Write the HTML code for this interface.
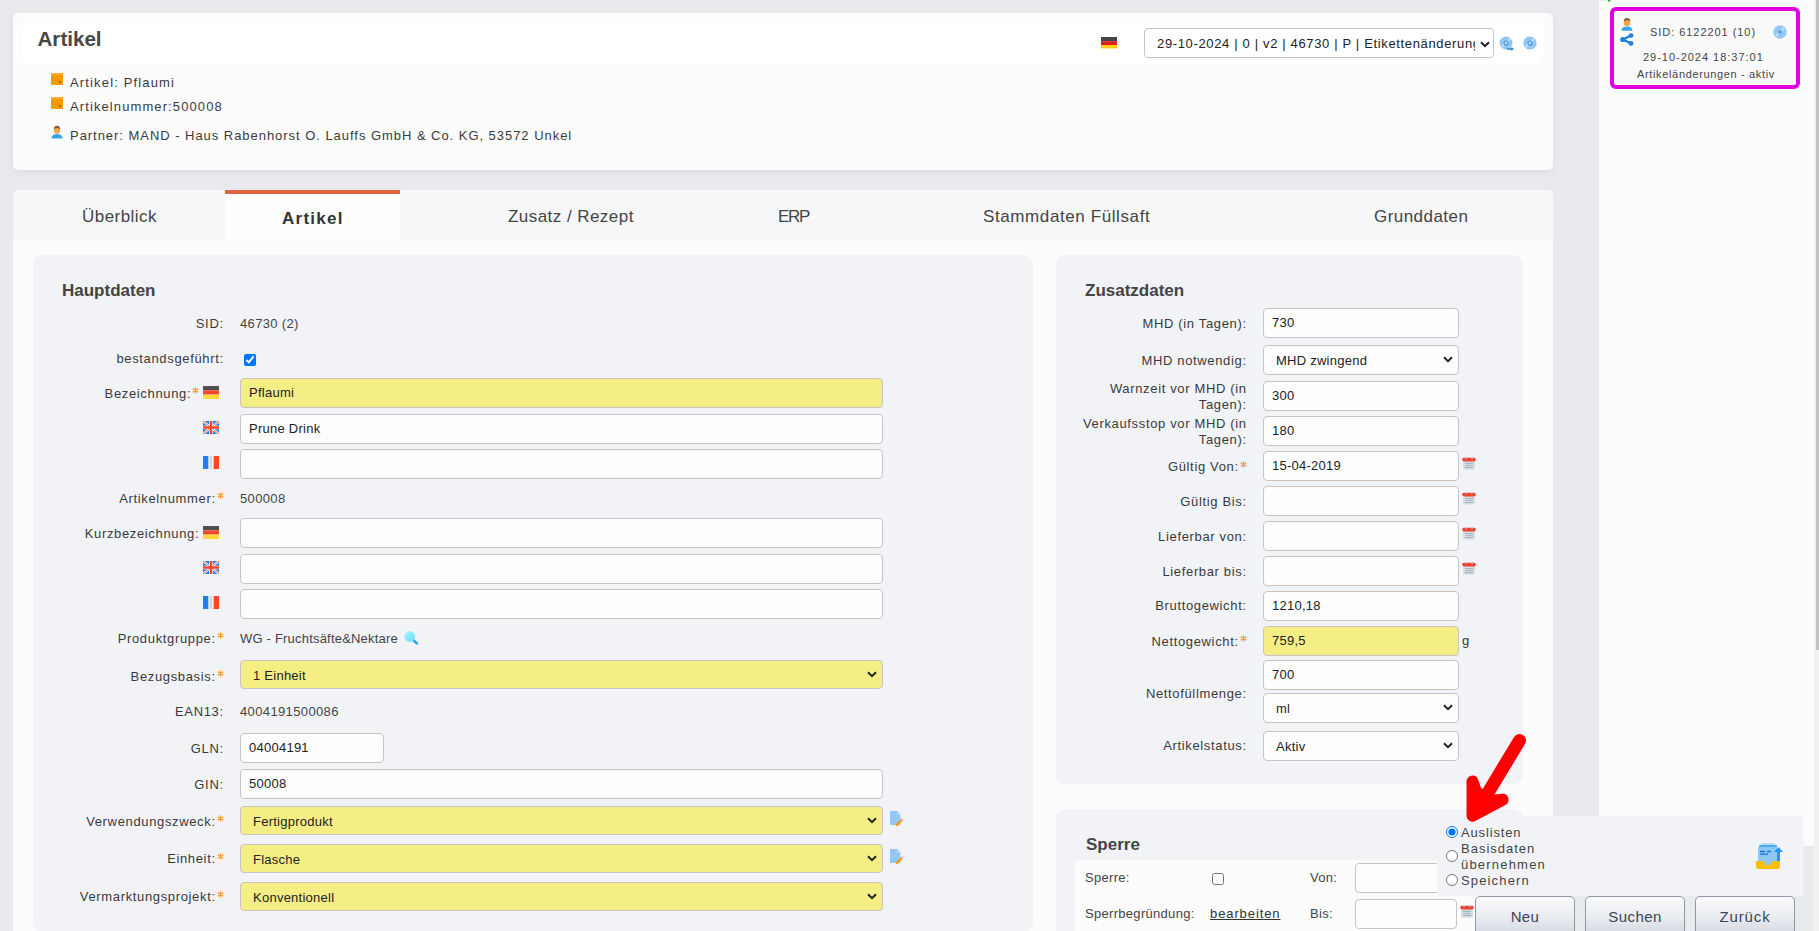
<!DOCTYPE html>
<html><head><meta charset="utf-8">
<style>
*{box-sizing:border-box;margin:0;padding:0}
html,body{width:1819px;height:931px;overflow:hidden;background:#e9eaee;font-family:"Liberation Sans",sans-serif;color:#444}
.a{position:absolute}
.t{position:absolute;font-size:13px;line-height:16px;letter-spacing:0.65px;white-space:nowrap;color:#3a3a3a}
.r{text-align:right}
.inp{position:absolute;height:29px;border:1px solid #c8c4c4;border-radius:4px;background:#fdfdfd;font-size:13px;line-height:27px;letter-spacing:0.25px;color:#222;padding-left:8px;white-space:nowrap;overflow:hidden}
.y{background:#f5ee85}
.sel{padding-left:12px}
.chev{position:absolute;right:5px;top:10px;width:10px;height:7px}
.star{color:#f39200}
.flag{position:absolute;width:16px;height:13px}
.h2{position:absolute;font-size:17px;font-weight:bold;line-height:20px;color:#444;white-space:nowrap}
.tab{position:absolute;top:207px;font-size:17px;line-height:20px;letter-spacing:0.45px;color:#444;white-space:nowrap}
.cal{position:absolute;width:13px;height:12px}
.btn{position:absolute;top:896px;width:100px;height:40px;border:1px solid #8d97a8;border-radius:5px;background:linear-gradient(#fbfbfc,#e6e9ee 60%,#d3d8e0);font-size:15px;color:#3b4556;text-align:center;line-height:40px;letter-spacing:0.4px}
</style></head><body>

<!-- header card -->
<div class="a" style="left:13px;top:13px;width:1540px;height:157px;background:#fcfcfd;border-radius:5px;box-shadow:0 2px 8px rgba(0,0,0,0.055)"></div>
<div class="a" style="left:23px;top:23px;width:1520px;height:40px;background:#fff;border-radius:6px"></div>
<div class="a" style="left:37.5px;top:27px;font-size:20.6px;font-weight:bold;line-height:24px;color:#474747">Artikel</div>
<!-- tab bar -->
<div class="a" style="left:13px;top:190px;width:1540px;height:50px;background:#f6f7f9;border-radius:5px 5px 0 0"></div>
<div class="a" style="left:225px;top:190px;width:175px;height:50px;background:#fdfdfd;border-top:4px solid #dd6640"></div>
<!-- content white -->
<div class="a" style="left:13px;top:240px;width:1540px;height:700px;background:#fcfcfc"></div>

<!-- panels -->
<div class="a" style="left:33px;top:255px;width:1000px;height:677px;background:#f2f3f7;border-radius:9px"></div>
<div class="a" style="left:1056px;top:255px;width:467px;height:529px;background:#f2f3f7;border-radius:9px"></div>
<div class="a" style="left:1056px;top:809px;width:467px;height:200px;background:#f2f3f7;border-radius:9px"></div>

<!-- sidebar -->
<div class="a" style="left:1599px;top:0;width:215px;height:846px;background:#fcfcfc"></div>
<div class="a" style="left:1814px;top:0;width:5px;height:931px;background:#f1f1f1"></div>


<!-- header flag + select + icons -->
<svg class="a" style="left:1101px;top:36px" width="16" height="13" viewBox="0 0 16 13"><rect y="1" width="16" height="4" fill="#2b2b2b"/><rect y="5" width="16" height="4" fill="#dd1f1f"/><rect y="9" width="16" height="3.5" fill="#ffcc1a"/><rect y="1" width="16" height="5" fill="#fff" opacity="0.12"/></svg>
<div class="inp sel" style="left:1144px;top:28px;width:350px;height:30px;background:#fff;line-height:30px;padding-left:12px;color:#222"><span style="display:inline-block;width:318px;overflow:hidden;vertical-align:top;letter-spacing:0.65px">29-10-2024 | 0 | v2 | 46730 | P | Etikettenänderung</span><svg class="chev" style="top:12px;right:3px" viewBox="0 0 10 7"><path d="M1 1.2 L5 5.2 L9 1.2" fill="none" stroke="#222" stroke-width="2"/></svg></div>
<svg class="a" style="left:1499px;top:36px" width="16" height="16" viewBox="0 0 16 16"><circle cx="7" cy="7" r="6.5" fill="#92c6f3"/><path d="M2.5 11.5 L11.5 2.5" stroke="#cfe6fb" stroke-width="1.2"/><circle cx="7" cy="7" r="2" fill="none" stroke="#4a97e0" stroke-width="1.1"/><path d="M8 13 H14" stroke="#2f86d8" stroke-width="1.6"/><path d="M12.3 11 L15 13 L12.3 15 Z" fill="#2f86d8"/></svg>
<svg class="a" style="left:1523px;top:36px" width="14" height="14" viewBox="0 0 14 14"><circle cx="7" cy="7" r="6.6" fill="#92c6f3"/><path d="M2.5 11.5 L11.5 2.5" stroke="#cfe6fb" stroke-width="1.2"/><circle cx="7" cy="7" r="2" fill="none" stroke="#4a97e0" stroke-width="1.1"/></svg>

<!-- header items -->
<svg class="a" style="left:51px;top:73px" width="12" height="12" viewBox="0 0 12 12"><rect x="0" y="0" width="12" height="12" rx="1" fill="#fb9700"/><rect x="0" y="0" width="12" height="2" fill="#ffad33"/><rect x="8" y="8" width="2" height="2" fill="#b36a00"/></svg>
<div class="t" style="left:70px;top:75px;letter-spacing:1.15px">Artikel: Pflaumi</div>
<svg class="a" style="left:51px;top:97px" width="12" height="12" viewBox="0 0 12 12"><rect x="0" y="0" width="12" height="12" rx="1" fill="#fb9700"/><rect x="0" y="0" width="12" height="2" fill="#ffad33"/><rect x="8" y="8" width="2" height="2" fill="#b36a00"/></svg>
<div class="t" style="left:70px;top:99px;letter-spacing:1.1px">Artikelnummer:500008</div>
<svg class="a" style="left:51px;top:125px" width="12" height="14" viewBox="0 0 12 14"><path d="M0.5 13.5 Q0.5 9 6 9 Q11.5 9 11.5 13.5 Z" fill="#3aa6e6"/><ellipse cx="6" cy="5" rx="3.2" ry="3.8" fill="#f5a347"/><path d="M2.8 4.5 Q3 0.8 6 0.8 Q9 0.8 9.2 4.5 Q8 2.8 6 3 Q4 2.8 2.8 4.5Z" fill="#8a5a2b"/></svg>
<div class="t" style="left:70px;top:128px;letter-spacing:0.96px">Partner: MAND - Haus Rabenhorst O. Lauffs GmbH &amp; Co. KG, 53572 Unkel</div>

<!-- tabs text -->
<div class="tab" style="left:82px">Überblick</div>
<div class="tab" style="left:282px;top:209px;font-weight:bold;color:#333;letter-spacing:1.25px">Artikel</div>
<div class="tab" style="left:508px">Zusatz / Rezept</div>
<div class="tab" style="left:778px;letter-spacing:-1.3px">ERP</div>
<div class="tab" style="left:983px;letter-spacing:0.6px">Stammdaten Füllsaft</div>
<div class="tab" style="left:1374px">Grunddaten</div>


<!-- Hauptdaten -->
<div class="h2" style="left:62px;top:281px">Hauptdaten</div>
<div class="t r" style="left:0;width:223.7px;top:315.5px;letter-spacing:0.65px">SID:</div>
<div class="t" style="left:240px;top:315.5px;letter-spacing:0.35px;color:#444">46730 (2)</div>
<div class="t r" style="left:0;width:223.7px;top:350.5px;letter-spacing:0.65px">bestandsgeführt:</div>
<input type="checkbox" checked class="a" style="left:244px;top:354px;width:12px;height:12px">
<div class="t r" style="left:0;width:199.2px;top:385.5px;letter-spacing:0.65px">Bezeichnung:<svg width="7" height="7" viewBox="0 0 7 7" style="display:inline-block;vertical-align:3.3px;margin-left:1px"><path d="M3.5 0.2 V6.8 M0.64 1.85 L6.36 5.15 M0.64 5.15 L6.36 1.85" stroke="#f7982a" stroke-width="1.15"/></svg></div>
<svg class="a" style="left:203px;top:386px" width="16" height="13" viewBox="0 0 16 13"><defs><linearGradient id="dg1" x1="0" y1="0" x2="0" y2="1"><stop offset="0" stop-color="#fff" stop-opacity="0.12"/><stop offset="1" stop-color="#fff" stop-opacity="0"/></linearGradient></defs><rect y="0" width="16" height="4.3" fill="#3c3c3c"/><rect y="4.3" width="16" height="4.3" fill="#f03c22"/><rect y="8.6" width="16" height="4.4" fill="#ffd83a"/><rect width="16" height="13" fill="url(#dg1)"/></svg>
<div class="inp y" style="left:240px;top:378px;width:643px;height:30px;line-height:28px">Pflaumi</div>
<svg class="a" style="left:203px;top:421px" width="16" height="13" viewBox="0 0 16 13"><rect width="16" height="13" fill="#1f7fe6"/><path d="M0 0 L16 13 M16 0 L0 13" stroke="#fff" stroke-width="2.2"/><path d="M0 0 L16 13 M16 0 L0 13" stroke="#f24a2a" stroke-width="0.9"/><path d="M8 0 V13 M0 6.5 H16" stroke="#fff" stroke-width="3.6"/><path d="M8 0 V13 M0 6.5 H16" stroke="#f5452a" stroke-width="2.4"/></svg>
<div class="inp" style="left:240px;top:414px;width:643px;height:30px;line-height:28px">Prune Drink</div>
<svg class="a" style="left:203px;top:456px" width="16" height="13" viewBox="0 0 16 13"><defs><linearGradient id="fg1" x1="0" y1="0" x2="1" y2="0"><stop offset="0.36" stop-color="#f4f4f4"/><stop offset="0.5" stop-color="#cfd2d6"/><stop offset="0.64" stop-color="#f4f4f4"/></linearGradient></defs><rect width="16" height="13" fill="url(#fg1)"/><rect width="5.3" height="13" fill="#1e7ff0"/><rect x="10.7" width="5.3" height="13" fill="#fb4524"/></svg>
<div class="inp" style="left:240px;top:449px;width:643px;height:30px;line-height:28px"></div>
<div class="t r" style="left:0;width:223.7px;top:490.5px;letter-spacing:0.65px">Artikelnummer:<svg width="7" height="7" viewBox="0 0 7 7" style="display:inline-block;vertical-align:3.3px;margin-left:1px"><path d="M3.5 0.2 V6.8 M0.64 1.85 L6.36 5.15 M0.64 5.15 L6.36 1.85" stroke="#f7982a" stroke-width="1.15"/></svg></div>
<div class="t" style="left:240px;top:490.5px;letter-spacing:0.35px;color:#444">500008</div>
<div class="t r" style="left:0;width:199.2px;top:526.0px;letter-spacing:0.65px">Kurzbezeichnung:</div>
<svg class="a" style="left:203px;top:526px" width="16" height="13" viewBox="0 0 16 13"><defs><linearGradient id="dg2" x1="0" y1="0" x2="0" y2="1"><stop offset="0" stop-color="#fff" stop-opacity="0.12"/><stop offset="1" stop-color="#fff" stop-opacity="0"/></linearGradient></defs><rect y="0" width="16" height="4.3" fill="#3c3c3c"/><rect y="4.3" width="16" height="4.3" fill="#f03c22"/><rect y="8.6" width="16" height="4.4" fill="#ffd83a"/><rect width="16" height="13" fill="url(#dg2)"/></svg>
<div class="inp" style="left:240px;top:518px;width:643px;height:30px;line-height:28px"></div>
<svg class="a" style="left:203px;top:561px" width="16" height="13" viewBox="0 0 16 13"><rect width="16" height="13" fill="#1f7fe6"/><path d="M0 0 L16 13 M16 0 L0 13" stroke="#fff" stroke-width="2.2"/><path d="M0 0 L16 13 M16 0 L0 13" stroke="#f24a2a" stroke-width="0.9"/><path d="M8 0 V13 M0 6.5 H16" stroke="#fff" stroke-width="3.6"/><path d="M8 0 V13 M0 6.5 H16" stroke="#f5452a" stroke-width="2.4"/></svg>
<div class="inp" style="left:240px;top:554px;width:643px;height:30px;line-height:28px"></div>
<svg class="a" style="left:203px;top:596px" width="16" height="13" viewBox="0 0 16 13"><defs><linearGradient id="fg2" x1="0" y1="0" x2="1" y2="0"><stop offset="0.36" stop-color="#f4f4f4"/><stop offset="0.5" stop-color="#cfd2d6"/><stop offset="0.64" stop-color="#f4f4f4"/></linearGradient></defs><rect width="16" height="13" fill="url(#fg2)"/><rect width="5.3" height="13" fill="#1e7ff0"/><rect x="10.7" width="5.3" height="13" fill="#fb4524"/></svg>
<div class="inp" style="left:240px;top:589px;width:643px;height:30px;line-height:28px"></div>
<div class="t r" style="left:0;width:223.7px;top:630.5px;letter-spacing:0.65px">Produktgruppe:<svg width="7" height="7" viewBox="0 0 7 7" style="display:inline-block;vertical-align:3.3px;margin-left:1px"><path d="M3.5 0.2 V6.8 M0.64 1.85 L6.36 5.15 M0.64 5.15 L6.36 1.85" stroke="#f7982a" stroke-width="1.15"/></svg></div>
<div class="t" style="left:240px;top:630.5px;letter-spacing:0.2px;color:#444">WG - Fruchtsäfte&amp;Nektare</div>
<svg class="a" style="left:402px;top:629px" width="18" height="18" viewBox="0 0 18 18"><defs><linearGradient id="mg" x1="0" y1="0" x2="1" y2="1"><stop offset="0" stop-color="#a6fafc"/><stop offset="1" stop-color="#6cd6f8"/></linearGradient></defs><path d="M10.5 10.5 L15 14.5" stroke="#2ea6e6" stroke-width="2.4" stroke-linecap="round"/><circle cx="7.7" cy="7.5" r="5.4" fill="url(#mg)"/></svg>
<div class="t r" style="left:0;width:223.7px;top:668.5px;letter-spacing:0.65px">Bezugsbasis:<svg width="7" height="7" viewBox="0 0 7 7" style="display:inline-block;vertical-align:3.3px;margin-left:1px"><path d="M3.5 0.2 V6.8 M0.64 1.85 L6.36 5.15 M0.64 5.15 L6.36 1.85" stroke="#f7982a" stroke-width="1.15"/></svg></div>
<div class="inp y sel" style="left:240px;top:660px;width:643px;height:29px;line-height:29px">1 Einheit<svg class="chev" viewBox="0 0 10 7"><path d="M1 1.2 L5 5.2 L9 1.2" fill="none" stroke="#222" stroke-width="2"/></svg></div>
<div class="t r" style="left:0;width:223.7px;top:703.5px;letter-spacing:0.65px">EAN13:</div>
<div class="t" style="left:240px;top:703.5px;letter-spacing:0.37px;color:#444">4004191500086</div>
<div class="t r" style="left:0;width:223.7px;top:740.5px;letter-spacing:0.65px">GLN:</div>
<div class="inp" style="left:240px;top:733px;width:144px;height:30px;line-height:28px">04004191</div>
<div class="t r" style="left:0;width:223.7px;top:776.5px;letter-spacing:0.65px">GIN:</div>
<div class="inp" style="left:240px;top:769px;width:643px;height:30px;line-height:28px">50008</div>
<div class="t r" style="left:0;width:223.7px;top:813.5px;letter-spacing:0.65px">Verwendungszweck:<svg width="7" height="7" viewBox="0 0 7 7" style="display:inline-block;vertical-align:3.3px;margin-left:1px"><path d="M3.5 0.2 V6.8 M0.64 1.85 L6.36 5.15 M0.64 5.15 L6.36 1.85" stroke="#f7982a" stroke-width="1.15"/></svg></div>
<div class="inp y sel" style="left:240px;top:806px;width:643px;height:29px;line-height:29px">Fertigprodukt<svg class="chev" viewBox="0 0 10 7"><path d="M1 1.2 L5 5.2 L9 1.2" fill="none" stroke="#222" stroke-width="2"/></svg></div>
<svg class="a" style="left:889px;top:810px" width="16" height="17" viewBox="0 0 16 17"><path d="M1 1 H8 L11.3 4.3 V15 H1 Z" fill="#90c8f6"/><path d="M7.6 2 L10.5 4.9 L8 4.6 Z" fill="#c6e6fb"/><path d="M7.2 15.6 L12.2 10.6" stroke="#f39c12" stroke-width="2.6"/><path d="M12.2 10.6 L13.6 9.2" stroke="#e8a0a8" stroke-width="2.6"/></svg>
<div class="t r" style="left:0;width:223.7px;top:851.0px;letter-spacing:0.65px">Einheit:<svg width="7" height="7" viewBox="0 0 7 7" style="display:inline-block;vertical-align:3.3px;margin-left:1px"><path d="M3.5 0.2 V6.8 M0.64 1.85 L6.36 5.15 M0.64 5.15 L6.36 1.85" stroke="#f7982a" stroke-width="1.15"/></svg></div>
<div class="inp y sel" style="left:240px;top:844px;width:643px;height:29px;line-height:29px">Flasche<svg class="chev" viewBox="0 0 10 7"><path d="M1 1.2 L5 5.2 L9 1.2" fill="none" stroke="#222" stroke-width="2"/></svg></div>
<svg class="a" style="left:889px;top:848px" width="16" height="17" viewBox="0 0 16 17"><path d="M1 1 H8 L11.3 4.3 V15 H1 Z" fill="#90c8f6"/><path d="M7.6 2 L10.5 4.9 L8 4.6 Z" fill="#c6e6fb"/><path d="M7.2 15.6 L12.2 10.6" stroke="#f39c12" stroke-width="2.6"/><path d="M12.2 10.6 L13.6 9.2" stroke="#e8a0a8" stroke-width="2.6"/></svg>
<div class="t r" style="left:0;width:223.7px;top:889.0px;letter-spacing:0.65px">Vermarktungsprojekt:<svg width="7" height="7" viewBox="0 0 7 7" style="display:inline-block;vertical-align:3.3px;margin-left:1px"><path d="M3.5 0.2 V6.8 M0.64 1.85 L6.36 5.15 M0.64 5.15 L6.36 1.85" stroke="#f7982a" stroke-width="1.15"/></svg></div>
<div class="inp y sel" style="left:240px;top:882px;width:643px;height:29px;line-height:29px">Konventionell<svg class="chev" viewBox="0 0 10 7"><path d="M1 1.2 L5 5.2 L9 1.2" fill="none" stroke="#222" stroke-width="2"/></svg></div>
<!-- Zusatzdaten -->
<div class="h2" style="left:1085px;top:281px">Zusatzdaten</div>
<div class="t r" style="left:0;width:1246.7px;top:316.0px;letter-spacing:0.65px">MHD (in Tagen):</div>
<div class="inp" style="left:1263px;top:308px;width:196px;height:30px;line-height:28px">730</div>
<div class="t r" style="left:0;width:1246.7px;top:353.0px;letter-spacing:0.65px">MHD notwendig:</div>
<div class="inp sel" style="left:1263px;top:345px;width:196px;height:30px;line-height:30px">MHD zwingend<svg class="chev" viewBox="0 0 10 7"><path d="M1 1.2 L5 5.2 L9 1.2" fill="none" stroke="#222" stroke-width="2"/></svg></div>
<div class="t r" style="left:0;width:1246.7px;top:380.5px;letter-spacing:0.65px">Warnzeit vor MHD (in</div>
<div class="t r" style="left:0;width:1246.7px;top:396.5px;letter-spacing:0.65px">Tagen):</div>
<div class="inp" style="left:1263px;top:381px;width:196px;height:30px;line-height:28px">300</div>
<div class="t r" style="left:0;width:1246.7px;top:415.5px;letter-spacing:0.65px">Verkaufsstop vor MHD (in</div>
<div class="t r" style="left:0;width:1246.7px;top:431.5px;letter-spacing:0.65px">Tagen):</div>
<div class="inp" style="left:1263px;top:416px;width:196px;height:30px;line-height:28px">180</div>
<div class="t r" style="left:0;width:1246.7px;top:459.0px;letter-spacing:0.65px">Gültig Von:<svg width="7" height="7" viewBox="0 0 7 7" style="display:inline-block;vertical-align:3.3px;margin-left:1px"><path d="M3.5 0.2 V6.8 M0.64 1.85 L6.36 5.15 M0.64 5.15 L6.36 1.85" stroke="#f7982a" stroke-width="1.15"/></svg></div>
<div class="inp" style="left:1263px;top:451px;width:196px;height:30px;line-height:28px">15-04-2019</div>
<svg class="a" style="left:1462px;top:457px" width="14" height="13" viewBox="0 0 14 13"><rect x="1" y="3.5" width="12" height="9" rx="1.2" fill="#d6dee4"/><rect x="3" y="6" width="8" height="1.1" fill="#a6b5be"/><rect x="3" y="8" width="8" height="1.1" fill="#aebcc4"/><rect x="3" y="10" width="8" height="1.1" fill="#a6b5be"/><rect x="0.2" y="0.8" width="13.6" height="3.6" rx="1.8" fill="#ef3f2f"/><rect x="3.4" y="0" width="1.2" height="2.4" fill="#c0c4c8"/><rect x="9.4" y="0" width="1.2" height="2.4" fill="#c0c4c8"/></svg>
<div class="t r" style="left:0;width:1246.7px;top:493.5px;letter-spacing:0.65px">Gültig Bis:</div>
<div class="inp" style="left:1263px;top:486px;width:196px;height:30px;line-height:28px"></div>
<svg class="a" style="left:1462px;top:492px" width="14" height="13" viewBox="0 0 14 13"><rect x="1" y="3.5" width="12" height="9" rx="1.2" fill="#d6dee4"/><rect x="3" y="6" width="8" height="1.1" fill="#a6b5be"/><rect x="3" y="8" width="8" height="1.1" fill="#aebcc4"/><rect x="3" y="10" width="8" height="1.1" fill="#a6b5be"/><rect x="0.2" y="0.8" width="13.6" height="3.6" rx="1.8" fill="#ef3f2f"/><rect x="3.4" y="0" width="1.2" height="2.4" fill="#c0c4c8"/><rect x="9.4" y="0" width="1.2" height="2.4" fill="#c0c4c8"/></svg>
<div class="t r" style="left:0;width:1246.7px;top:528.5px;letter-spacing:0.65px">Lieferbar von:</div>
<div class="inp" style="left:1263px;top:521px;width:196px;height:30px;line-height:28px"></div>
<svg class="a" style="left:1462px;top:527px" width="14" height="13" viewBox="0 0 14 13"><rect x="1" y="3.5" width="12" height="9" rx="1.2" fill="#d6dee4"/><rect x="3" y="6" width="8" height="1.1" fill="#a6b5be"/><rect x="3" y="8" width="8" height="1.1" fill="#aebcc4"/><rect x="3" y="10" width="8" height="1.1" fill="#a6b5be"/><rect x="0.2" y="0.8" width="13.6" height="3.6" rx="1.8" fill="#ef3f2f"/><rect x="3.4" y="0" width="1.2" height="2.4" fill="#c0c4c8"/><rect x="9.4" y="0" width="1.2" height="2.4" fill="#c0c4c8"/></svg>
<div class="t r" style="left:0;width:1246.7px;top:563.5px;letter-spacing:0.65px">Lieferbar bis:</div>
<div class="inp" style="left:1263px;top:556px;width:196px;height:30px;line-height:28px"></div>
<svg class="a" style="left:1462px;top:562px" width="14" height="13" viewBox="0 0 14 13"><rect x="1" y="3.5" width="12" height="9" rx="1.2" fill="#d6dee4"/><rect x="3" y="6" width="8" height="1.1" fill="#a6b5be"/><rect x="3" y="8" width="8" height="1.1" fill="#aebcc4"/><rect x="3" y="10" width="8" height="1.1" fill="#a6b5be"/><rect x="0.2" y="0.8" width="13.6" height="3.6" rx="1.8" fill="#ef3f2f"/><rect x="3.4" y="0" width="1.2" height="2.4" fill="#c0c4c8"/><rect x="9.4" y="0" width="1.2" height="2.4" fill="#c0c4c8"/></svg>
<div class="t r" style="left:0;width:1246.7px;top:598.0px;letter-spacing:0.65px">Bruttogewicht:</div>
<div class="inp" style="left:1263px;top:591px;width:196px;height:30px;line-height:28px">1210,18</div>
<div class="t r" style="left:0;width:1246.7px;top:633.5px;letter-spacing:0.65px">Nettogewicht:<svg width="7" height="7" viewBox="0 0 7 7" style="display:inline-block;vertical-align:3.3px;margin-left:1px"><path d="M3.5 0.2 V6.8 M0.64 1.85 L6.36 5.15 M0.64 5.15 L6.36 1.85" stroke="#f7982a" stroke-width="1.15"/></svg></div>
<div class="inp y" style="left:1263px;top:626px;width:196px;height:30px;line-height:28px">759,5</div>
<div class="t" style="left:1462px;top:632.5px;letter-spacing:0.35px;color:#444;color:#333">g</div>
<div class="t r" style="left:0;width:1246.7px;top:685.5px;letter-spacing:0.65px">Nettofüllmenge:</div>
<div class="inp" style="left:1263px;top:660px;width:196px;height:30px;line-height:28px">700</div>
<div class="inp sel" style="left:1263px;top:693px;width:196px;height:30px;line-height:30px">ml<svg class="chev" viewBox="0 0 10 7"><path d="M1 1.2 L5 5.2 L9 1.2" fill="none" stroke="#222" stroke-width="2"/></svg></div>
<div class="t r" style="left:0;width:1246.7px;top:738.0px;letter-spacing:0.65px">Artikelstatus:</div>
<div class="inp sel" style="left:1263px;top:731px;width:196px;height:30px;line-height:30px">Aktiv<svg class="chev" viewBox="0 0 10 7"><path d="M1 1.2 L5 5.2 L9 1.2" fill="none" stroke="#222" stroke-width="2"/></svg></div>
<!-- Sperre -->
<div class="h2" style="left:1086px;top:835px">Sperre</div>
<div class="a" style="left:1075px;top:860px;width:448px;height:80px;background:#fcfcfc"></div>
<div class="t" style="left:1085px;top:869.5px;letter-spacing:0.3px;color:#444">Sperre:</div>
<input type="checkbox" class="a" style="left:1211.5px;top:873px;width:12px;height:12px">
<div class="t" style="left:1310px;top:869.5px;letter-spacing:0.3px;color:#444">Von:</div>
<div class="inp" style="left:1355px;top:863px;width:102px;height:30px;line-height:28px"></div>
<div class="t" style="left:1085px;top:905.5px;letter-spacing:0.3px;color:#444">Sperrbegründung:</div>
<div class="t" style="left:1210px;top:905.5px;letter-spacing:0.9px;color:#444;color:#333"><u>bearbeiten</u></div>
<div class="t" style="left:1310px;top:905.5px;letter-spacing:0.3px;color:#444">Bis:</div>
<div class="inp" style="left:1355px;top:899px;width:102px;height:30px;line-height:28px"></div>
<svg class="a" style="left:1460px;top:905px" width="14" height="13" viewBox="0 0 14 13"><rect x="1" y="3.5" width="12" height="9" rx="1.2" fill="#d6dee4"/><rect x="3" y="6" width="8" height="1.1" fill="#a6b5be"/><rect x="3" y="8" width="8" height="1.1" fill="#aebcc4"/><rect x="3" y="10" width="8" height="1.1" fill="#a6b5be"/><rect x="0.2" y="0.8" width="13.6" height="3.6" rx="1.8" fill="#ef3f2f"/><rect x="3.4" y="0" width="1.2" height="2.4" fill="#c0c4c8"/><rect x="9.4" y="0" width="1.2" height="2.4" fill="#c0c4c8"/></svg>
<!-- sidebar content -->
<div class="a" style="left:1816px;top:0;width:3px;height:650px;background:#c1c1c1"></div>
<svg class="a" style="left:1600px;top:0" width="14" height="4" viewBox="0 0 14 4"><rect x="0" y="0" width="7" height="1" fill="#e8f3e8"/><path d="M7.8 0 H11 L9.2 2.2 L8.2 1.5 Z" fill="#4fb04f"/></svg>
<div class="a" style="left:1610px;top:7px;width:190px;height:82px;border:4px solid #e000e0;border-radius:6px;background:#fafafb"></div>
<svg class="a" style="left:1621px;top:17px" width="12" height="14" viewBox="0 0 12 14"><path d="M0.5 13.8 Q0.5 9.6 6 9.6 Q11.5 9.6 11.5 13.8 Z" fill="#3aa6e6"/><ellipse cx="6" cy="5.4" rx="3.2" ry="3.8" fill="#f5a347"/><path d="M2.7 5 Q2.8 1 6 1 Q9.2 1 9.3 5 Q8.2 3 6 3.2 Q3.8 3 2.7 5Z" fill="#8a5a2b"/></svg>
<svg class="a" style="left:1620px;top:33px" width="14" height="13" viewBox="0 0 14 13"><path d="M3 6.5 L11 2.5 M3 6.5 L11 10.5" stroke="#1e7fe0" stroke-width="2.2"/><circle cx="2.8" cy="6.5" r="2.6" fill="#1e7fe0"/><circle cx="11" cy="2.6" r="2.4" fill="#1e7fe0"/><circle cx="11" cy="10.4" r="2.4" fill="#1e7fe0"/></svg>
<div class="a" style="left:1650px;top:25px;font-size:11px;line-height:14px;letter-spacing:0.95px;color:#444;white-space:nowrap">SID: 6122201 (10)</div>
<svg class="a" style="left:1773px;top:25px" width="14" height="14" viewBox="0 0 14 14"><circle cx="7" cy="7" r="6.7" fill="#93c7f4"/><path d="M3 11 L11 3" stroke="#d3e8fb" stroke-width="1.3"/><circle cx="7" cy="7" r="1.8" fill="#4a97e0"/></svg>
<div class="a" style="left:1643px;top:50px;font-size:11px;line-height:14px;letter-spacing:0.98px;color:#444;white-space:nowrap">29-10-2024 18:37:01</div>
<div class="a" style="left:1637px;top:67px;font-size:11px;line-height:14px;letter-spacing:0.65px;color:#444;white-space:nowrap">Artikeländerungen - aktiv</div>
<!-- overlay -->
<div class="a" style="left:1437px;top:816px;width:366px;height:80px;background:#f2f3f7"></div>
<input type="radio" name="rr" checked class="a" style="left:1445.5px;top:826px;width:12px;height:12px">
<input type="radio" name="rr" class="a" style="left:1445.5px;top:850px;width:12px;height:12px">
<input type="radio" name="rr" class="a" style="left:1445.5px;top:874px;width:12px;height:12px">
<div class="t" style="left:1461px;top:824.5px;letter-spacing:0.85px;color:#444">Auslisten</div>
<div class="t" style="left:1461px;top:840.5px;letter-spacing:1.0px;color:#444">Basisdaten</div>
<div class="t" style="left:1461px;top:856.5px;letter-spacing:1.2px;color:#444">übernehmen</div>
<div class="t" style="left:1461px;top:872.5px;letter-spacing:1.15px;color:#444">Speichern</div>
<svg class="a" style="left:1755px;top:842px" width="30" height="28" viewBox="0 0 30 28">
<rect x="6" y="1" width="14" height="2" rx="1" fill="#b5dbf9"/>
<rect x="4" y="3" width="18" height="3" rx="1.2" fill="#4aa8f0"/>
<path d="M3 5 H22 V19 H3 Z" fill="#90c8f5"/>
<path d="M5 9.5 H10 M12 9.5 H16" stroke="#1f6fd0" stroke-width="1.4"/>
<path d="M5 12.2 H13" stroke="#3a86d8" stroke-width="1.8"/>
<path d="M19 10 L23.5 5 L28 10 Z" fill="#2196f3"/><rect x="22" y="9" width="3" height="10" fill="#2196f3"/>
<path d="M8 18.5 H18 Q16.5 24.2 13 24.2 Q9.5 24.2 8 18.5 Z" fill="#8ec6f5"/>
<path d="M1 19 H9 Q10.5 23.5 13 23.5 Q15.5 23.5 17 19 H25 V25 Q25 27 23 27 H3 Q1 27 1 25 Z" fill="#ffc107"/>
</svg>
<div class="btn" style="left:1475px">Neu</div>
<div class="btn" style="left:1585px">Suchen</div>
<div class="btn" style="left:1695px;letter-spacing:0.9px">Zurück</div>
<!-- red arrow -->
<svg class="a" style="left:1440px;top:720px" width="100" height="110" viewBox="1440 720 100 110">
<path d="M1519.5 740.5 L1480 806" stroke="#ff0000" stroke-width="13" stroke-linecap="round"/>
<path d="M1472.5 781.6 L1476.1 792.2 L1493.6 800.8 L1502.6 799.6 L1472.5 815.7 Z" fill="#ff0000" stroke="#ff0000" stroke-width="12" stroke-linejoin="round"/>
</svg>

</body></html>
